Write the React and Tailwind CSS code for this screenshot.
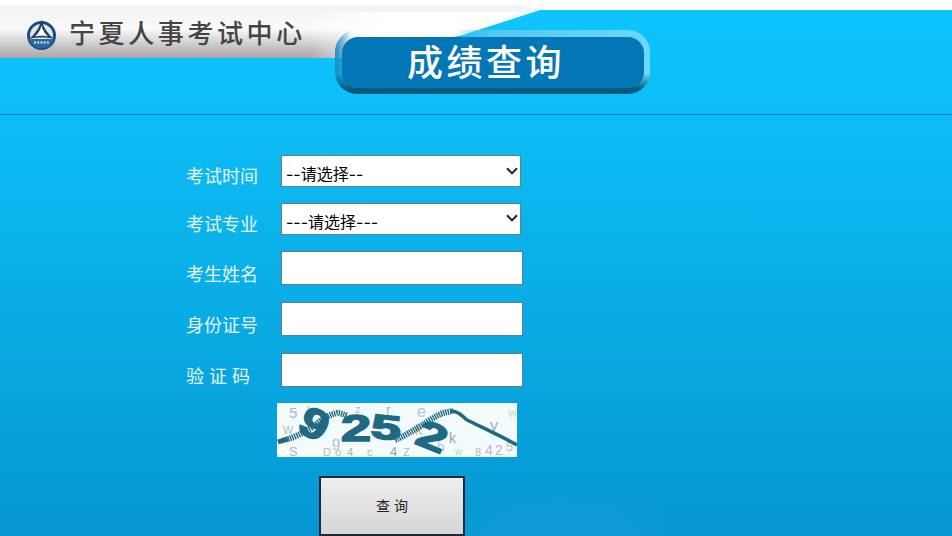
import React from "react";

const cjk = "font-['Liberation_Sans','Noto_Sans_CJK_SC',sans-serif]";

function HeaderBackdrop() {
  return (
    <svg className="absolute inset-0" width="952" height="114" viewBox="0 0 952 114">
      <defs>
        <linearGradient id="band" x1="0" y1="0" x2="0" y2="1">
          <stop offset="0" stopColor="#f2f2f2" />
          <stop offset="0.45" stopColor="#fbfbfb" />
          <stop offset="0.8" stopColor="#c4c2c2" />
          <stop offset="1" stopColor="#a9a7a7" />
        </linearGradient>
        <linearGradient id="fade" x1="0" y1="0" x2="1" y2="0">
          <stop offset="0" stopColor="#fff" stopOpacity="0" />
          <stop offset="0.35" stopColor="#fff" />
          <stop offset="1" stopColor="#fff" />
        </linearGradient>
      </defs>
      <rect x="0" y="0" width="952" height="10" fill="#fff" />
      <path d="M0 5H522L540 10L463 35L345 58H0Z" fill="url(#band)" />
      <path d="M310 12H520L463 35L345 58H310Z" fill="url(#fade)" />
    </svg>
  );
}

function Logo() {
  return (
    <svg width="31" height="31" viewBox="0 0 31 31">
      <circle cx="15.5" cy="16.5" r="13" fill="#dfe8f0" stroke="#1d4a86" strokeWidth="3" />
      <path d="M3 20H28C27 26 21 29.5 15.5 29.5C10 29.5 4 26 3 20Z" fill="#2a68a6" />
      <path d="M15.5 0.5C14 8 9 15 3 20C9 18 22 18 28 20C22 15 17 8 15.5 0.5Z" fill="#24405f" />
      <path d="M15.5 6.5C14.5 11 12 15 9 17.5C12 16.6 19 16.6 22 17.5C19 15 16.5 11 15.5 6.5Z" fill="#fff" />
      <path d="M8 23.5H23" stroke="#d6e6f5" strokeWidth="2" strokeDasharray="2 1.2" />
    </svg>
  );
}

function Captcha() {
  const noise = [
    [12, 15, "5", "#9fb4d8", 15], [30, 12, "l", "#b9c9b8", 13], [6, 31, "w", "#a9cdaa", 14],
    [78, 10, "z", "#cdb0e0", 11], [109, 12, "r", "#a8bcc0", 14], [140, 14, "e", "#b9c2d8", 16],
    [138, 32, "k", "#d9b79a", 15], [55, 44, "g", "#b4c4c0", 15], [12, 53, "S", "#c3a8dc", 13],
    [46, 53, "D", "#b0bcc0", 11], [58, 53, "o", "#b0bcc0", 11], [70, 53, "4", "#a8b8a8", 11],
    [90, 53, "c", "#b0b8c0", 11], [113, 53, "4", "#8fa4a8", 13], [126, 53, "Z", "#b0bcc8", 11],
    [172, 40, "k", "#8fa8a8", 14], [160, 49, "h", "#b5d0c0", 14], [178, 52, "w", "#b5dcb8", 10],
    [198, 53, "8", "#b0bcc0", 11], [213, 28, "y", "#a8a8b8", 16], [208, 52, "4", "#d0a8dc", 14],
    [218, 52, "2", "#d0a8dc", 14], [231, 14, "w", "#c8dcb0", 12], [229, 48, "5", "#b8c4a8", 13],
  ];
  return (
    <svg width="240" height="54" viewBox="0 0 240 54" className="block">
      <rect width="240" height="54" fill="#f4fbfd" />
      {noise.map(([x, y, t, c, s], i) => (
        <text key={i} x={x} y={y} fill={c} fontSize={s} fontFamily="Liberation Sans, sans-serif">
          {t}
        </text>
      ))}
      <g fill="#1e6a82" stroke="#1e6a82" strokeWidth="1.6" fontFamily="Liberation Sans, sans-serif" fontWeight="700">
        <text x="22" y="36" fontSize="42" textLength="28" lengthAdjust="spacingAndGlyphs" transform="rotate(28 38 24)">9</text>
        <text x="64" y="38" fontSize="36" textLength="30" lengthAdjust="spacingAndGlyphs">2</text>
        <text x="94" y="36" fontSize="34" textLength="30" lengthAdjust="spacingAndGlyphs" transform="rotate(6 108 26)">5</text>
        <text x="140" y="46" fontSize="38" textLength="30" lengthAdjust="spacingAndGlyphs" transform="rotate(22 154 34)">2</text>
      </g>
      <path d="M1 39C4 38 7 37 11 36" fill="none" stroke="#1e6a82" strokeWidth="5" />
      <path d="M11 36C18 34 26 30 34 25C42 19 50 12 60 10C63 10 66 11 70 13" fill="none" stroke="#1e6a82" strokeWidth="6" strokeDasharray="1.4 0.9" />
      <path d="M118 37C134 30 148 20 158 14C164 10 170 9 176 8" fill="none" stroke="#1e6a82" strokeWidth="6" strokeDasharray="1.4 0.9" />
      <path d="M174 8C180 8 184 12 190 17C204 24 222 32 240 42" fill="none" stroke="#1e6a82" strokeWidth="3.5" />
    </svg>
  );
}

function Row({ label, className, labelClass, children }) {
  return (
    <div className={`flex items-start ${className}`}>
      <label className={`-ml-px w-[95px] text-[18px] leading-[20px] text-[#e4f6fd] whitespace-nowrap ${labelClass}`}>{label}</label>
      {children}
    </div>
  );
}

function SelectBox({ text, chevronClass }) {
  return (
    <div className="relative h-[32px] w-[240px]">
      <select className="h-full w-full appearance-none border border-[#5f7f90] bg-white pl-[4px] pt-[5px] font-['Inter','Noto_Sans_CJK_SC',sans-serif] text-[16px] text-black">
        <option>{text}</option>
      </select>
      <svg className={`pointer-events-none absolute right-[3px] ${chevronClass}`} width="12" height="8" viewBox="0 0 12 8">
        <path d="M1 1.2L6 6.4L11 1.2" fill="none" stroke="#222" strokeWidth="2" />
      </svg>
    </div>
  );
}

export default function App() {
  return (
    <div className={`relative h-[536px] w-full overflow-hidden bg-gradient-to-b from-[#0ec6ff] via-[#0bb0e8] to-[#0596d3] ${cjk}`}>
      <div className="absolute bottom-[-50px] left-[450px] h-[80px] w-[220px] rounded-[50%] bg-[#2ea6da] opacity-35 blur-xl" />

      <header className="relative flex h-[115px] items-start border-b border-[#0a78b0]">
        <HeaderBackdrop />
        <div className="relative flex w-[335px] items-center pl-[26px] pt-[19px]">
          <Logo />
          <span className="ml-[12px] text-[26px] font-medium leading-[31px] tracking-[3.6px] text-[#444] whitespace-nowrap">宁夏人事考试中心</span>
        </div>
        <div className="relative mt-[30px] h-[64px] w-[315px] rounded-[22px] bg-[linear-gradient(180deg,transparent_68%,#07597f_92%),linear-gradient(90deg,#1a8fc0_0%,#1a8fc000_5%,#1a8fc000_38%,#55c8ef_50%,#6ad8f8_100%)] pl-[7px] pt-[7px]">
          <div className="flex h-[51px] w-[302px] items-center justify-center rounded-[16px] bg-[#0377b6] pr-[14px] pt-[2px] text-[36px] font-medium tracking-[3.5px] text-white">
            成绩查询
          </div>
        </div>
      </header>

      <form className="relative pl-[187px] pt-[40px]">
        <Row label="考试时间" labelClass="pt-[12px]">
          <SelectBox text="--请选择--" chevronClass="top-[12px]" />
        </Row>
        <Row label="考试专业" labelClass="pt-[12px]" className="mt-[16px]">
          <SelectBox text="---请选择---" chevronClass="top-[11px]" />
        </Row>
        <Row label="考生姓名" labelClass="pt-[14px]" className="mt-[16px]">
          <input className="h-[34px] w-[242px] border border-[#5f7f90] bg-white" />
        </Row>
        <Row label="身份证号" labelClass="pt-[14px]" className="mt-[17px]">
          <input className="h-[34px] w-[242px] border border-[#5f7f90] bg-white" />
        </Row>
        <Row label="验 证 码" labelClass="pt-[14px]" className="mt-[17px]">
          <input className="h-[34px] w-[242px] border border-[#5f7f90] bg-white" />
        </Row>
        <div className="ml-[90px] mt-[16px] w-[240px]">
          <Captcha />
        </div>
        <button type="button" className="ml-[132px] mt-[19px] block h-[60px] w-[146px] border-2 border-[#1b2a38] bg-gradient-to-b from-[#eeeeee] to-[#d6d6d6] text-[14px] text-[#222]">
          查 询
        </button>
      </form>
    </div>
  );
}
